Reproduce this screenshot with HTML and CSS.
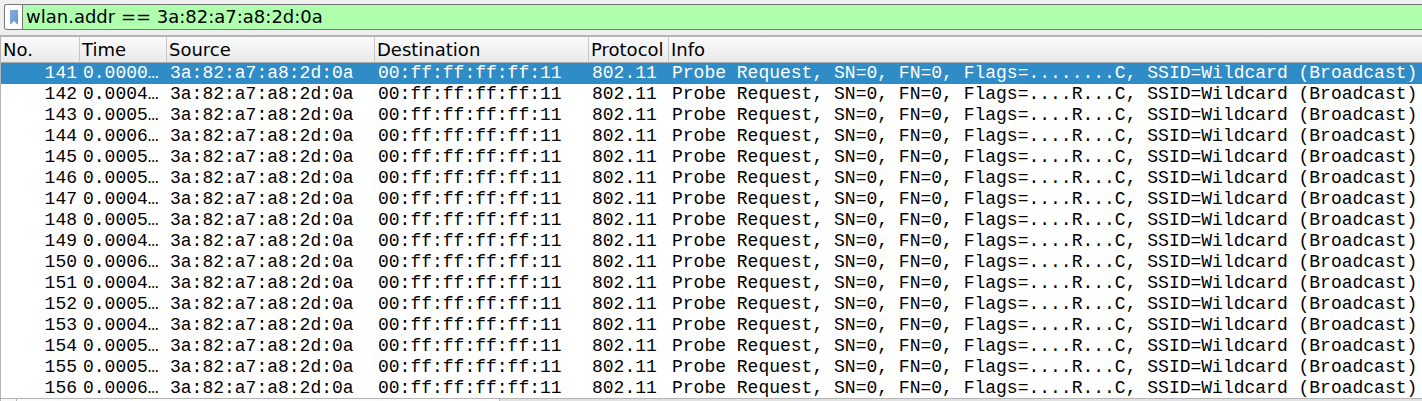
FILE: index.html
```html
<!DOCTYPE html>
<html lang="en">
<head>
<meta charset="utf-8">
<title>Packet list</title>
<link rel="stylesheet" href="styles.css">
</head>
<body>
<form class="filter-bar">
  <button class="bookmark" type="button" aria-label="Filter bookmarks">
    <svg width="8" height="14" viewBox="0 0 8 14" aria-hidden="true">
      <defs><linearGradient id="ribbon" x1="0" y1="0" x2="1" y2="1"><stop offset="0" stop-color="#86abd9"/><stop offset="1" stop-color="#6797cf"/></linearGradient></defs>
      <path d="M0 0H8V14H7L4 11L1 14H0Z" fill="url(#ribbon)"/>
    </svg>
  </button>
  <input class="filter-input" type="text" aria-label="Display filter" value="wlan.addr == 3a:82:a7:a8:2d:0a" spellcheck="false">
</form>
<main class="packet-pane">
  <div class="packet-view">
    <table class="packets">
      <colgroup><col class="col-no"><col class="col-time"><col class="col-address"><col class="col-destination"><col class="col-protocol"><col></colgroup>
      <thead>
        <tr><th>No.</th><th>Time</th><th>Source</th><th>Destination</th><th>Protocol</th><th>Info</th></tr>
      </thead>
      <tbody id="rows"></tbody>
    </table>
  </div>
  <div class="scrollbar"><span class="scroll-button"></span><span class="scroll-handle"></span></div>
</main>
<script src="packets.js"></script>
</body>
</html>
```

FILE: styles.css
```css
* { box-sizing: border-box; }
body {
  margin: 0;
  height: 100vh;
  overflow: hidden;
  display: flex;
  flex-direction: column;
  background: #efefef;
  color: #000;
  font: 18px/21px "DejaVu Sans", sans-serif;
}
.filter-bar {
  display: flex;
  flex: none;
  height: 26px;
  margin: 4px 0 5px 4px;
  border: 1px solid #777;
  border-right: 0;
  border-radius: 3px 0 0 3px;
  background: #afffaf;
  overflow: hidden;
}
.bookmark {
  display: flex;
  flex: none;
  align-items: center;
  justify-content: center;
  width: 18px;
  padding: 0;
  border: 0;
  border-right: 1px solid #777;
  background: #fff;
}
.filter-input {
  flex: 1;
  min-width: 0;
  padding: 0 3px 2px;
  border: 0;
  outline: 0;
  background: transparent;
  color: #000;
  font: inherit;
}
.packet-pane {
  display: flex;
  flex: 1;
  flex-direction: column;
  min-height: 0;
  border-top: 2px solid #b4b4b4;
  border-left: 1px solid #b4b4b4;
  background: #fff;
}
.packet-view {
  flex: 1;
  min-height: 0;
  overflow: hidden;
}
.packets {
  width: 100%;
  table-layout: fixed;
  border-collapse: separate;
  border-spacing: 0;
}
.col-no { width: 79px; }
.col-time { width: 87px; }
.col-address { width: 208px; }
.col-destination { width: 214px; }
.col-protocol { width: 80px; }
.packets th {
  height: 26px;
  padding: 0 2px;
  border-right: 1px solid #c6c6c6;
  border-bottom: 1px solid #a8a8a8;
  background: linear-gradient(#fbfbfb, #e9e9e9);
  font-weight: 400;
  text-align: left;
  white-space: nowrap;
}
.packets th:last-child { border-right: 0; }
.packets td {
  height: 21px;
  padding: 0 3px;
  overflow: hidden;
  font-family: "Liberation Mono", monospace;
  line-height: 21px;
  white-space: nowrap;
}
.packets td:first-child { text-align: right; }
.packets .selected { background: #308cc6; color: #fff; }
.scrollbar {
  display: flex;
  flex: none;
  height: 3px;
  border-top: 1px solid #b4b4b4;
  background: #e2e2e2;
}
.scroll-button {
  width: 16px;
  border-right: 1px solid #b4b4b4;
  background: #f8f8f8;
}
.scroll-handle {
  width: 34%;
  border-right: 1px solid #b4b4b4;
  background: #fbfbfb;
}
```

FILE: packets.js
```js
const times = ["0.0000…", "0.0004…", "0.0005…", "0.0006…", "0.0005…", "0.0005…", "0.0004…", "0.0005…", "0.0004…", "0.0006…", "0.0004…", "0.0005…", "0.0004…", "0.0005…", "0.0005…", "0.0006…"];
const body = document.getElementById("rows");

times.forEach((time, i) => {
  const row = body.insertRow();
  const flags = i === 0 ? "........C" : "....R...C";
  if (i === 0) row.className = "selected";
  [
    141 + i,
    time,
    "3a:82:a7:a8:2d:0a",
    "00:ff:ff:ff:ff:11",
    "802.11",
    `Probe Request, SN=0, FN=0, Flags=${flags}, SSID=Wildcard (Broadcast)`
  ].forEach(text => { row.insertCell().textContent = text; });
});
```
